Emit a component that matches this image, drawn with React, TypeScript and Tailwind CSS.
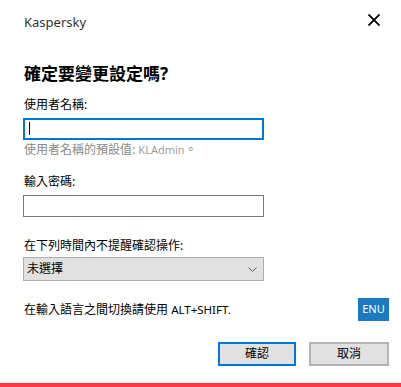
import { useState } from "react";

/* Kaspersky confirmation dialog: asks for credentials before changing settings. */
const font = { fontFamily: '"Noto Sans", "Noto Sans CJK TC", sans-serif' };

export default function App() {
  const [user, setUser] = useState("");
  const [pass, setPass] = useState("");

  return (
    <div style={font} className="flex h-[387px] w-[401px] flex-col bg-white text-black">
      <div className="flex items-start justify-between pl-6 pr-[21px] pt-[13px]">
        <span className="text-[13px] leading-[18px] text-[#333]">Kaspersky</span>
        <button className="mt-[1px] text-black" title="Close">
          <svg width="12" height="12" viewBox="0 0 12 12" fill="none" stroke="currentColor" strokeWidth="1.8">
            <path d="M0.5 0.5 L11.5 11.5 M11.5 0.5 L0.5 11.5" />
          </svg>
        </button>
      </div>

      <div className="flex flex-col pl-6 pr-3">
        <h1 className="mt-[33px] text-[17px] font-bold leading-[20px]">確定要變更設定嗎?</h1>

        <label className="mt-[13px] text-[12px] leading-[16px]">使用者名稱:</label>
        <div className="relative mt-[5px] h-[22px] w-[241px] -ml-px border-2 border-[#0078d7]">
          <input
            value={user}
            onChange={(e) => setUser(e.target.value)}
            className="h-full w-full px-1 text-[12px] outline-none"
          />
          {!user && <span className="absolute left-[4px] top-[2px] h-[13px] w-px bg-black" />}
        </div>
        <p className="mt-[2px] text-[12px] leading-[16px] text-[#8a8a8a]">
          使用者名稱的預設值: <span className="text-[11px] text-[#a0a0a0]">KLAdmin</span>。
        </p>

        <label className="mt-[16px] text-[12px] leading-[16px]">輸入密碼:</label>
        <input
          type="password"
          value={pass}
          onChange={(e) => setPass(e.target.value)}
          className="mt-[5px] h-[22px] w-[241px] -ml-px border border-[#7a7a7a] px-1 text-[12px] outline-none"
        />

        <label className="mt-[21px] text-[12px] leading-[16px]">在下列時間內不提醒確認操作:</label>
        <div className="mt-[3px] flex h-[24px] w-[241px] -ml-px items-center justify-between border border-[#adadad] bg-[#e1e1e1] pl-[3px] pr-[6px]">
          <span className="text-[12px] leading-[16px]">未選擇</span>
          <svg width="9" height="5" viewBox="0 0 9 5" fill="none" stroke="#555" strokeWidth="1">
            <path d="M0.5 0.5 L4.5 4.5 L8.5 0.5" />
          </svg>
        </div>

        <div className="mt-[17px] flex h-[23px] items-center justify-between">
          <span className="text-[12px] leading-[16px]">
            在輸入語言之間切換請使用 <span className="text-[11.5px]">ALT+SHIFT.</span>
          </span>
          <span className="flex h-[23px] w-[31px] items-center justify-center bg-[#1a7bc2] text-[11px] text-white">
            ENU
          </span>
        </div>

        <div className="mt-[21px] flex justify-end gap-[13px]">
          <button className="h-[24px] w-[78px] border-2 border-[#0078d7] bg-[#e1e1e1] text-[12px]">確認</button>
          <button className="h-[24px] w-[80px] border-2 border-[#b4b4b4] bg-[#e1e1e1] text-[12px]">取消</button>
        </div>
      </div>

      <div className="mt-auto h-[4px] bg-[#ff3648]" />
    </div>
  );
}
